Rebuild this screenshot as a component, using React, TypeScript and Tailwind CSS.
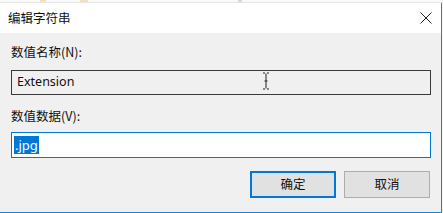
import React from "react";

const font = { fontFamily: '"Noto Sans", "Noto Sans CJK SC", sans-serif' };
const cjk = { fontFamily: '"Noto Sans CJK SC", sans-serif' };

export default function App() {
  return (
    <div
      className="w-[443px] h-[213px] overflow-hidden bg-[#f4f4f4] flex flex-col text-[12px] text-black"
      style={font}
    >
      <div className="h-[3px] bg-[#fafafa] border-b border-[#e6e6e6] flex">
        <div className="w-[40px]" />
        <div className="w-[6px] bg-[#f3e3b0]" />
        <div className="w-[34px]" />
        <div className="w-[8px] bg-[#efe2bd]" />
        <div className="w-[150px]" />
        <div className="w-[4px] bg-[#d9d9d9]" />
      </div>
      <div className="w-[442px] flex-1 flex flex-col border-r border-b border-[#1883d7]">
        <div className="h-[30px] bg-white flex items-center pl-[8px] pr-[9px] justify-between">
          <span className="text-[12.5px] text-[#111]" style={cjk}>编辑字符串</span>
          <svg width="12" height="12" viewBox="0 0 12 12">
            <path d="M0.5 0.5 L11.5 11.5 M11.5 0.5 L0.5 11.5" stroke="#222" strokeWidth="1" fill="none" />
          </svg>
        </div>
        <div className="flex-1 bg-[#f0f0f0] pl-[11px] pr-[10px] pt-[11px] flex flex-col">
          <div className="h-[16px] leading-[16px] text-[12.5px] text-[#111]" style={cjk}>
            数值名称(N):
          </div>
          <div className="mt-[10px] relative h-[25px] border border-[#3a3a3a] bg-[#f0f0f0] flex items-center pl-[5px]">
            <span className="text-[12.5px] text-[#111]">Extension</span>
            <svg className="absolute left-[250px] top-[1px]" width="8" height="18" viewBox="0 0 8 18">
              <path d="M1 1 H3 M5 1 H7 M4 1.5 V16.5 M1 17 H3 M5 17 H7 M2.5 9 H5.5" stroke="#222" strokeWidth="1" fill="none" />
            </svg>
          </div>
          <div className="mt-[13px] h-[16px] leading-[16px] text-[12.5px] text-[#111]" style={cjk}>
            数值数据(V):
          </div>
          <div className="mt-[8px] h-[26px] border border-[#0078d7] bg-white flex items-center pl-[2px]">
            <span className="bg-[#0078d7] text-white text-[13px] leading-[18px] px-[1px]">.jpg</span>
          </div>
          <div className="mt-[13px] flex justify-end gap-[8px] pr-[1px]">
            <button className="w-[86px] h-[27px] bg-[#e1e1e1] border-2 border-[#0078d7] text-[12.5px] text-[#111] flex items-center justify-center" style={cjk}>
              确定
            </button>
            <button className="w-[86px] h-[27px] bg-[#e1e1e1] border border-[#adadad] text-[12.5px] text-[#111] flex items-center justify-center" style={cjk}>
              取消
            </button>
          </div>
        </div>
      </div>
    </div>
  );
}
